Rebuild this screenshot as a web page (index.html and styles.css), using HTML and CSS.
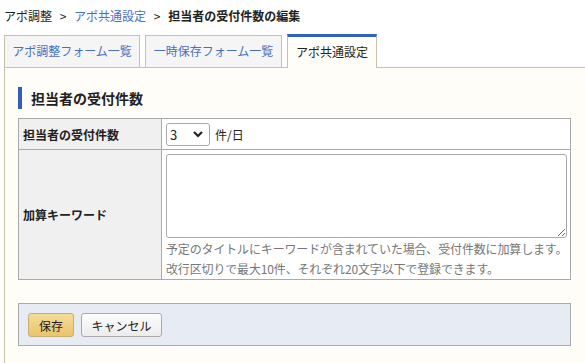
FILE: index.html
```html
<!DOCTYPE html>
<html lang="ja">
    <head>
        <meta charset="UTF-8">
        <meta name="viewport" content="width=device-width, initial-scale=1.0">
        <title>担当者の受付件数の編集</title>
        <link rel="stylesheet" href="styles.css">
    </head>
    <body>
        <div class="breadcrumb">
            <span>アポ調整</span>
            <span class="sep">&gt;</span>
            <a href="#">アポ共通設定</a>
            <span class="sep">&gt;</span>
            <strong>担当者の受付件数の編集</strong>
        </div>

        <ul class="tabs">
            <li class="tab"><a href="#">アポ調整フォーム一覧</a></li>
            <li class="tab"><a href="#">一時保存フォーム一覧</a></li>
            <li class="tab active">アポ共通設定</li>
        </ul>

        <div class="panel">
            <h2 class="sectionTitle">担当者の受付件数</h2>
            <table class="formTable">
                <tr class="countRow">
                    <th>担当者の受付件数</th>
                    <td>
                        <div class="countField">
                            <div class="fakeSelect">
                                <span>3</span>
                                <svg width="12" height="12" viewBox="0 0 12 12">
                                    <path d="M2 4l4 4 4-4" fill="none" stroke="#222" stroke-width="2.2"/>
                                </svg>
                            </div>
                            <span>件/日</span>
                        </div>
                    </td>
                </tr>
                <tr>
                    <th>加算キーワード</th>
                    <td class="keywordCell">
                        <textarea class="keywords"></textarea>
                        <div class="hint">予定のタイトルにキーワードが含まれていた場合、受付件数に加算します。</div>
                        <div class="hint">改行区切りで最大10件、それぞれ20文字以下で登録できます。</div>
                    </td>
                </tr>
            </table>

            <div class="actions">
                <button class="btn btnSave">保存</button>
                <button class="btn btnCancel">キャンセル</button>
            </div>
        </div>
    </body>
</html>
```

FILE: styles.css
```css
body {
    margin: 0;
    font-family: "Noto Sans CJK JP", "Noto Sans", sans-serif;
    font-size: 12px;
    color: #222;
    background: #fff;
}
a {
    color: #4a6fc0;
    text-decoration: none;
}
.breadcrumb {
    height: 33px;
    padding: 0 4px;
    line-height: 31px;
    font-size: 12px;
}
.breadcrumb .sep {
    margin: 0 5px;
}
.breadcrumb strong {
    font-weight: bold;
}

.tabs {
    display: flex;
    gap: 5px;
    margin: 0 0 0 4px;
    padding: 0;
    list-style: none;
    align-items: flex-end;
}
.tab {
    height: 31px;
    line-height: 30px;
    border: 1px solid #c9c1a8;
    border-bottom: none;
    background: #f5f5f5;
    text-align: center;
}
.tab:nth-child(1) {
    width: 134px;
}
.tab:nth-child(2) {
    width: 135px;
}
.tab.active {
    width: 88px;
    height: 31px;
    border-top: 3px solid #2f62c0;
    background: #fffdf7;
    color: #222;
    position: relative;
    top: 1px;
    line-height: 30px;
}

.panel {
    border-top: 1px solid #c9c1a8;
    border-left: 1px solid #c9c1a8;
    margin-left: 4px;
    background: #fffdf7;
    padding: 19px 14px 20px 13px;
}
.sectionTitle {
    margin: 0;
    height: 22px;
    line-height: 22px;
    border-left: 4px solid #2f5fbf;
    padding-left: 9px;
    font-size: 14px;
    font-weight: bold;
}

.formTable {
    margin-top: 9px;
    width: 553px;
    border-collapse: collapse;
    background: #fff;
}
.formTable th,
.formTable td {
    border: 1px solid #aaa;
}
.formTable th {
    width: 138px;
    padding: 0 0 0 4px;
    text-align: left;
    background: #f0f0f0;
    font-weight: bold;
}
.formTable td {
    padding: 3px 2px 0 4px;
}
.countRow th,
.countRow td {
    height: 30px;
}
.countRow td {
    padding-top: 0;
}
.countField {
    display: flex;
    align-items: center;
    gap: 5px;
}
.fakeSelect {
    border: 1px solid #aaa;
    border-radius: 3px;
    background: #fff;
    display: flex;
    align-items: center;
    justify-content: space-between;
    padding: 0 5px 0 3px;
    box-sizing: border-box;
    width: 44px;
    height: 23px;
    font-size: 13px;
}
.keywordCell {
    vertical-align: top;
}
.keywords {
    display: block;
    width: 401px;
    height: 84px;
    box-sizing: border-box;
    border: 1px solid #aaa;
    border-radius: 3px;
    margin: 1px 0 1px;
    font-family: inherit;
}
.hint {
    color: #777;
    line-height: 20px;
    white-space: nowrap;
    letter-spacing: -0.15px;
}

.actions {
    margin-top: 23px;
    width: 553px;
    box-sizing: border-box;
    border: 1px solid #aaa;
    background: #e7ebf3;
    padding: 9px 9px 8px;
    display: flex;
    gap: 7px;
}
.btn {
    height: 24px;
    padding: 0;
    font-family: inherit;
    font-size: 12px;
    color: #222;
    border: 1px solid #aaa;
    border-radius: 3px;
    background: linear-gradient(#fdfdfd, #ececec);
}
.btnSave {
    width: 46px;
    border-color: #c9ad6a;
    background: linear-gradient(#f5dc96, #e8c56c);
}
.btnCancel {
    width: 81px;
}
```
